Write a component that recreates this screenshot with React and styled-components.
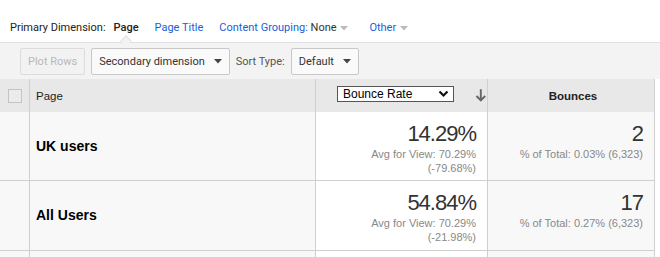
import React from 'react';
import styled, { createGlobalStyle } from 'styled-components';

const rows = [
  { name: 'UK users', rate: '14.29%', avg: '70.29%', diff: '(-79.68%)', bounces: '2', share: '0.03%' },
  { name: 'All Users', rate: '54.84%', avg: '70.29%', diff: '(-21.98%)', bounces: '17', share: '0.27%' },
];

const Caret = ({ color = '#444' }) => (
  <svg width="8" height="5" viewBox="0 0 8 5">
    <path d="M0 0h8L4 4.5z" fill={color} />
  </svg>
);

const App = () => {
  return (
    <Page>
      <GlobalStyle />
      <DimBar>
        <DimLabel>Primary Dimension:</DimLabel>
        <DimActive>Page<Notch /></DimActive>
        <DimLink>Page Title</DimLink>
        <DimLink $gap={21}>Content Grouping: <Plain>None</Plain> <Caret color="#bbb" /></DimLink>
        <DimLink>Other <Caret color="#bbb" /></DimLink>
      </DimBar>
      <Toolbar>
        <Button disabled>Plot Rows</Button>
        <Button>Secondary dimension <Caret /></Button>
        <ToolLabel>Sort Type:</ToolLabel>
        <Button>Default <Caret /></Button>
      </Toolbar>
      <Grid>
        <HeadCell><Check /></HeadCell>
        <HeadCell $pad>Page</HeadCell>
        <HeadCell $sorted>
          <MetricSelect>
            Bounce Rate
            <svg width="11" height="8" viewBox="0 0 11 8">
              <path d="M1.5 1.5l4 4 4-4" fill="none" stroke="#111" strokeWidth="2.2" />
            </svg>
          </MetricSelect>
          <svg width="12" height="13" viewBox="0 0 12 13">
            <path d="M6 0v11M1.5 7l4.5 4.5L10.5 7" fill="none" stroke="#666" strokeWidth="2" />
          </svg>
        </HeadCell>
        <HeadCell $center>Bounces</HeadCell>
        {rows.map((r) => (
          <React.Fragment key={r.name}>
            <Cell />
            <Cell $name>{r.name}</Cell>
            <Cell $num $sorted>
              <Big>{r.rate}</Big>
              <Small>Avg for View: {r.avg}</Small>
              <Small>{r.diff}</Small>
            </Cell>
            <Cell $num>
              <Big>{r.bounces}</Big>
              <Small>% of Total: {r.share} (6,323)</Small>
            </Cell>
          </React.Fragment>
        ))}
        <Cell $stub />
        <Cell $stub />
        <Cell $stub $sorted />
        <Cell $stub />
      </Grid>
    </Page>
  );
};

export default App;

const GlobalStyle = createGlobalStyle`
  body {
    margin: 0;
    background: #fff;
    font-family: Roboto, "Liberation Sans", sans-serif;
  }
`;

const Page = styled.div`
  width: 660px;
  height: 257px;
  overflow: hidden;
`;

const DimBar = styled.div`
  display: flex;
  align-items: baseline;
  height: 43px;
  box-sizing: border-box;
  padding: 21px 0 0 10px;
  border-bottom: 1px solid #e0e0e0;
  font-size: 11px;
`;

const DimLabel = styled.span`
  color: #222;
  margin-right: 8px;
`;

const DimActive = styled.span`
  position: relative;
  color: #222;
  font-weight: 500;
  margin-right: 16px;
`;

const Notch = styled.span`
  position: absolute;
  left: 8px;
  top: 16px;
  width: 7px;
  height: 7px;
  background: #f3f3f3;
  border-left: 1px solid #e0e0e0;
  border-top: 1px solid #e0e0e0;
  transform: rotate(45deg);
`;

const DimLink = styled.span`
  color: #1a5fd6;
  margin-right: ${(p) => p.$gap || 16}px;
  svg { vertical-align: middle; margin-left: 1px; }
`;

const Plain = styled.span`
  color: #333;
`;

const Toolbar = styled.div`
  display: flex;
  align-items: center;
  gap: 6px;
  height: 36px;
  padding: 0 0 0 20px;
  background: #f3f3f3;
`;

const Button = styled.button`
  display: flex;
  align-items: center;
  gap: 9px;
  height: 27px;
  padding: 0 7px 0 7px;
  border: 1px solid ${(p) => (p.disabled ? '#dcdcdc' : '#c8c8c8')};
  border-radius: 2px;
  background: ${(p) => (p.disabled ? '#f2f2f2' : '#fafafa')};
  color: ${(p) => (p.disabled ? '#b8b8b8' : '#333')};
  font-family: Roboto, "Liberation Sans", sans-serif;
  font-size: 11px;
`;

const ToolLabel = styled.span`
  color: #555;
  font-size: 11px;
`;

const Grid = styled.div`
  display: grid;
  width: 655px;
  grid-template-columns: 30px 286px 172px 167px;
  grid-template-rows: 33px 69px 70px 20px;
  font-family: "Liberation Sans", Arial, sans-serif;
`;

const HeadCell = styled.div`
  display: flex;
  align-items: center;
  justify-content: ${(p) => (p.$center ? 'center' : 'flex-start')};
  gap: 21px;
  box-sizing: border-box;
  padding-left: ${(p) => (p.$sorted ? 21 : p.$pad ? 6 : 8)}px;
  padding-right: ${(p) => (p.$center ? 4 : 0)}px;
  background: #e8e8e8;
  border-right: 1px solid #d0d0d0;
  color: #222;
  font-size: 11.5px;
  font-weight: ${(p) => (p.$center ? 700 : 400)};
`;

const Check = styled.span`
  width: 12px;
  height: 12px;
  border: 1px solid #c4c4c4;
  background: #ebebeb;
`;

const MetricSelect = styled.div`
  display: flex;
  align-items: center;
  justify-content: space-between;
  width: 121px;
  height: 16px;
  box-sizing: border-box;
  padding: 0 4px 0 5px;
  margin-top: -4px;
  border: 1px solid #555;
  background: #fff;
  color: #000;
  font-size: 12px;
`;

const Cell = styled.div`
  display: flex;
  flex-direction: column;
  align-items: ${(p) => (p.$num ? 'flex-end' : 'flex-start')};
  justify-content: ${(p) => (p.$name ? 'center' : 'flex-start')};
  box-sizing: border-box;
  padding: ${(p) => (p.$num ? '10px 11px 0 0' : p.$name ? '0 0 1px 6px' : '0')};
  background: ${(p) => (p.$sorted ? '#fff' : '#f8f8f8')};
  border-right: 1px solid #cfcfcf;
  border-bottom: ${(p) => (p.$stub ? 'none' : '1px solid #cfcfcf')};
  color: #000;
  font-size: 14px;
  font-weight: ${(p) => (p.$name ? 700 : 400)};
`;

const Big = styled.div`
  color: #333;
  font-size: 22px;
  line-height: 24px;
  letter-spacing: -1px;
  margin-bottom: 1px;
`;

const Small = styled.div`
  color: #888;
  font-size: 11px;
  line-height: 14px;
`;
